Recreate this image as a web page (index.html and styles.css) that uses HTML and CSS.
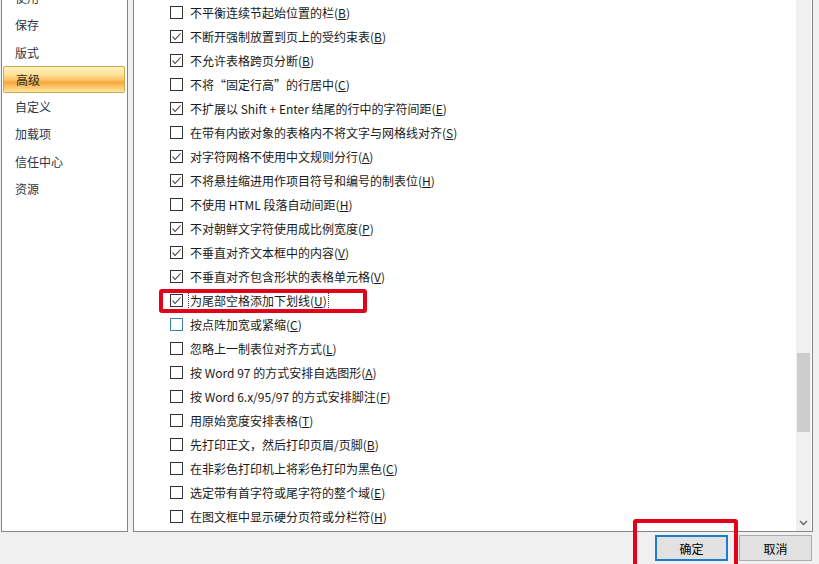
FILE: index.html
```html
<!DOCTYPE html>
<html lang="zh-CN">
<head>
<meta charset="utf-8">
<title>Word 选项 - 高级</title>
<link rel="stylesheet" href="styles.css">
</head>
<body>
<div class="main">
  <div class="nav">
    <div class="nav-item">使用</div>
    <div class="nav-item">保存</div>
    <div class="nav-item">版式</div>
    <div class="nav-item active">高级</div>
    <div class="nav-item">自定义</div>
    <div class="nav-item">加载项</div>
    <div class="nav-item">信任中心</div>
    <div class="nav-item">资源</div>
  </div>
  <div class="panel">
    <div class="list">
      <div class="row"><svg class="cb" viewBox="0 0 13 13"><rect x="0.5" y="0.5" width="12" height="12"/></svg><span>不平衡连续节起始位置的栏(<u>B</u>)</span></div>
      <div class="row"><svg class="cb" viewBox="0 0 13 13"><rect x="0.5" y="0.5" width="12" height="12"/><polyline points="2.5,6.5 5,9.5 10.5,3.5"/></svg><span>不断开强制放置到页上的受约束表(<u>B</u>)</span></div>
      <div class="row"><svg class="cb" viewBox="0 0 13 13"><rect x="0.5" y="0.5" width="12" height="12"/><polyline points="2.5,6.5 5,9.5 10.5,3.5"/></svg><span>不允许表格跨页分断(<u>B</u>)</span></div>
      <div class="row"><svg class="cb" viewBox="0 0 13 13"><rect x="0.5" y="0.5" width="12" height="12"/></svg><span>不将“固定行高”的行居中(<u>C</u>)</span></div>
      <div class="row"><svg class="cb" viewBox="0 0 13 13"><rect x="0.5" y="0.5" width="12" height="12"/><polyline points="2.5,6.5 5,9.5 10.5,3.5"/></svg><span>不扩展以 Shift + Enter 结尾的行中的字符间距(<u>E</u>)</span></div>
      <div class="row"><svg class="cb" viewBox="0 0 13 13"><rect x="0.5" y="0.5" width="12" height="12"/></svg><span>在带有内嵌对象的表格内不将文字与网格线对齐(<u>S</u>)</span></div>
      <div class="row"><svg class="cb" viewBox="0 0 13 13"><rect x="0.5" y="0.5" width="12" height="12"/><polyline points="2.5,6.5 5,9.5 10.5,3.5"/></svg><span>对字符网格不使用中文规则分行(<u>A</u>)</span></div>
      <div class="row"><svg class="cb" viewBox="0 0 13 13"><rect x="0.5" y="0.5" width="12" height="12"/><polyline points="2.5,6.5 5,9.5 10.5,3.5"/></svg><span>不将悬挂缩进用作项目符号和编号的制表位(<u>H</u>)</span></div>
      <div class="row"><svg class="cb" viewBox="0 0 13 13"><rect x="0.5" y="0.5" width="12" height="12"/></svg><span>不使用 HTML 段落自动间距(<u>H</u>)</span></div>
      <div class="row"><svg class="cb" viewBox="0 0 13 13"><rect x="0.5" y="0.5" width="12" height="12"/><polyline points="2.5,6.5 5,9.5 10.5,3.5"/></svg><span>不对朝鲜文字符使用成比例宽度(<u>P</u>)</span></div>
      <div class="row"><svg class="cb" viewBox="0 0 13 13"><rect x="0.5" y="0.5" width="12" height="12"/><polyline points="2.5,6.5 5,9.5 10.5,3.5"/></svg><span>不垂直对齐文本框中的内容(<u>V</u>)</span></div>
      <div class="row"><svg class="cb" viewBox="0 0 13 13"><rect x="0.5" y="0.5" width="12" height="12"/><polyline points="2.5,6.5 5,9.5 10.5,3.5"/></svg><span>不垂直对齐包含形状的表格单元格(<u>V</u>)</span></div>
      <div class="row"><svg class="cb" viewBox="0 0 13 13"><rect x="0.5" y="0.5" width="12" height="12"/><polyline points="2.5,6.5 5,9.5 10.5,3.5"/></svg><span class="focus">为尾部空格添加下划线(<u>U</u>)</span></div>
      <div class="row"><svg class="cb hover" viewBox="0 0 13 13"><rect x="0.5" y="0.5" width="12" height="12"/></svg><span>按点阵加宽或紧缩(<u>C</u>)</span></div>
      <div class="row"><svg class="cb" viewBox="0 0 13 13"><rect x="0.5" y="0.5" width="12" height="12"/></svg><span>忽略上一制表位对齐方式(<u>L</u>)</span></div>
      <div class="row"><svg class="cb" viewBox="0 0 13 13"><rect x="0.5" y="0.5" width="12" height="12"/></svg><span>按 Word 97 的方式安排自选图形(<u>A</u>)</span></div>
      <div class="row"><svg class="cb" viewBox="0 0 13 13"><rect x="0.5" y="0.5" width="12" height="12"/></svg><span>按 Word 6.x/95/97 的方式安排脚注(<u>F</u>)</span></div>
      <div class="row"><svg class="cb" viewBox="0 0 13 13"><rect x="0.5" y="0.5" width="12" height="12"/></svg><span>用原始宽度安排表格(<u>T</u>)</span></div>
      <div class="row"><svg class="cb" viewBox="0 0 13 13"><rect x="0.5" y="0.5" width="12" height="12"/></svg><span>先打印正文，然后打印页眉/页脚(<u>B</u>)</span></div>
      <div class="row"><svg class="cb" viewBox="0 0 13 13"><rect x="0.5" y="0.5" width="12" height="12"/></svg><span>在非彩色打印机上将彩色打印为黑色(<u>C</u>)</span></div>
      <div class="row"><svg class="cb" viewBox="0 0 13 13"><rect x="0.5" y="0.5" width="12" height="12"/></svg><span>选定带有首字符或尾字符的整个域(<u>E</u>)</span></div>
      <div class="row"><svg class="cb" viewBox="0 0 13 13"><rect x="0.5" y="0.5" width="12" height="12"/></svg><span>在图文框中显示硬分页符或分栏符(<u>H</u>)</span></div>
    </div>
    <div class="scrollbar">
      <div class="thumb"></div>
      <div class="spacer"></div>
      <div class="arrow"><svg width="9" height="6" viewBox="0 0 9 6"><polyline points="1,1 4.5,4.5 8,1"/></svg></div>
    </div>
  </div>
</div>
<div class="buttons">
  <div class="btn default">确定</div>
  <div class="btn">取消</div>
</div>
<div class="mark mark-row"></div>
<div class="mark mark-btn"></div>
</body>
</html>
```

FILE: styles.css
```css
html, body {
  margin: 0;
  padding: 0;
}
body {
  width: 819px;
  height: 564px;
  overflow: hidden;
  position: relative;
  background: #f0f0f0;
  font-family: "Noto Sans CJK SC", "Microsoft YaHei", sans-serif;
  font-size: 12px;
  color: #1a1a1a;
}
.main {
  display: flex;
  gap: 5px;
  margin-top: -24px;
  height: 556px;
  padding-left: 1px;
}
.nav {
  flex: none;
  box-sizing: border-box;
  width: 127px;
  height: 100%;
  border: 1px solid #858585;
  background: #fff;
  padding-top: 7px;
}
.nav-item {
  height: 27.3px;
  line-height: 27.3px;
  padding-left: 13px;
  color: #2a3546;
  box-sizing: border-box;
}
.nav-item.active {
  margin: 0 2px 0 1px;
  padding-left: 12px;
  border: 1px solid #d2a64c;
  border-radius: 2px;
  line-height: 25.3px;
  color: #2a2a2a;
  background: linear-gradient(#fff2c0 0%, #fde29a 30%, #fbc46a 50%, #f8a93c 62%, #fbc66a 80%, #fde9a6 100%);
}
.panel {
  flex: none;
  box-sizing: border-box;
  width: 680px;
  height: 100%;
  border: 1px solid #858585;
  background: #fff;
  display: flex;
}
.list {
  flex: 1;
  padding-top: 23px;
}
.row {
  display: flex;
  align-items: center;
  height: 24px;
  padding-left: 36px;
  white-space: nowrap;
}
.cb {
  flex: none;
  width: 13px;
  height: 13px;
  margin-right: 7px;
  fill: #fff;
  stroke: #333;
  stroke-width: 1;
}
.cb polyline {
  fill: none;
  stroke: #333;
  stroke-width: 1.1;
}
.cb.hover rect {
  stroke: #3c7fb3;
}
.row u {
  text-decoration: underline;
  text-underline-offset: 1px;
}
.focus {
  outline: 1px dotted #444;
  outline-offset: 0;
  padding: 0 1px;
  margin-left: -1px;
}
.scrollbar {
  flex: none;
  width: 15px;
  margin-right: 1px;
  background: #f0f0f0;
  display: flex;
  flex-direction: column;
}
.thumb {
  margin: 376px 1px 0 1px;
  height: 79px;
  background: #cdcdcd;
}
.spacer {
  flex: 1;
}
.arrow {
  height: 17px;
  display: flex;
  align-items: center;
  justify-content: center;
}
.arrow svg {
  fill: none;
  stroke: #606060;
  stroke-width: 1.3;
}
.buttons {
  display: flex;
  justify-content: flex-end;
  gap: 11px;
  padding-right: 7px;
  margin-top: 3px;
}
.btn {
  box-sizing: border-box;
  width: 73px;
  height: 26px;
  border: 1px solid #adadad;
  background: #e1e1e1;
  display: flex;
  align-items: center;
  justify-content: center;
  color: #000;
}
.btn.default {
  border: 2px solid #1d7bd0;
}
.mark {
  position: absolute;
  box-sizing: border-box;
  border: 4px solid #e2001b;
  border-radius: 3px;
}
.mark-row {
  left: 159px;
  top: 289px;
  width: 208px;
  height: 24px;
}
.mark-btn {
  left: 633px;
  top: 519px;
  width: 105px;
  height: 50px;
}
```
